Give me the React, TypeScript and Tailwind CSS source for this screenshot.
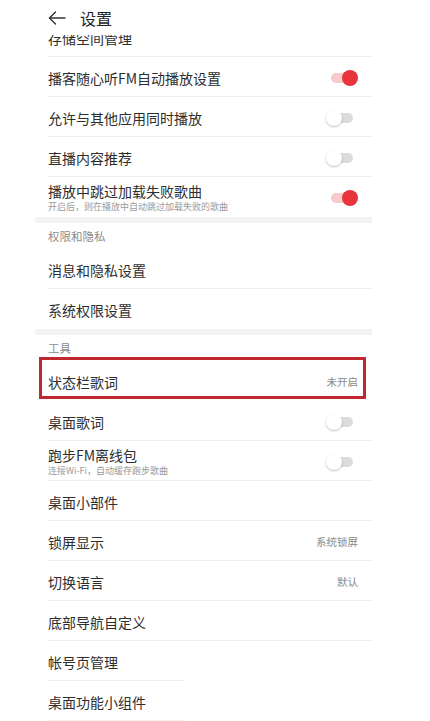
import React from "react";

type Row = {
  title: string;
  sub?: string;
  toggle?: boolean;
  on?: boolean;
  value?: string;
  line?: "full" | "short" | "none";
  mark?: boolean;
};

const font = { fontFamily: '"Noto Sans CJK SC", "Noto Sans", sans-serif' };

function Toggle({ on }: { on?: boolean }) {
  return (
    <div className="relative w-[32px] h-[16px] flex items-center">
      <div
        className={`absolute left-[5px] right-[5px] h-[10px] rounded-full ${on ? "bg-[#f7cacc]" : "bg-[#dcdcdc]"}`}
      />
      {on ? (
        <div className="absolute right-0 w-[16px] h-[16px] rounded-full bg-[#e8343a]" />
      ) : (
        <div className="absolute left-0 w-[16px] h-[16px] rounded-full bg-white shadow-[0_1px_2px_rgba(0,0,0,0.25)]" />
      )}
    </div>
  );
}

function SettingRow({ row }: { row: Row }) {
  return (
    <div className="relative h-[40px] pl-[13px]">
      <div className="h-full flex items-center pr-[14px] pt-[2px]">
        <div className="flex-1 flex flex-col">
          <span className="text-[14px] leading-[17px] text-[#2e2e2e]">{row.title}</span>
          {row.sub && (
            <span className="text-[9px] leading-[12px] text-[#9a9a9a] mt-[1px]">{row.sub}</span>
          )}
        </div>
        {row.toggle && <Toggle on={row.on} />}
        {row.value && <span className="text-[10.5px] text-[#8a8a8a]">{row.value}</span>}
      </div>
      {row.line !== "none" && (
        <div
          className={`absolute bottom-0 left-[13px] h-px bg-[#efefef] ${row.line === "short" ? "w-[137px]" : "right-0"}`}
        />
      )}
      {/* annotation box drawn over the row */}
      {row.mark && (
        <div className="absolute left-[4px] right-[6px] top-[-4px] bottom-[2px] border-[3px] border-[#c1272e]" />
      )}
    </div>
  );
}

function SectionHead({ label }: { label: string }) {
  return (
    <div className="h-[26px] pl-[13px] flex items-center pt-[2px]">
      <span className="text-[11.5px] text-[#8c8c8c]">{label}</span>
    </div>
  );
}

function Gap() {
  return <div className="h-[6px] bg-[#f3f3f3]" />;
}

const playback: Row[] = [
  { title: "存储空间管理" },
  { title: "播客随心听FM自动播放设置", toggle: true, on: true },
  { title: "允许与其他应用同时播放", toggle: true },
  { title: "直播内容推荐", toggle: true },
  { title: "播放中跳过加载失败歌曲", sub: "开启后，则在播放中自动跳过加载失败的歌曲", toggle: true, on: true, line: "none" },
];

const privacy: Row[] = [
  { title: "消息和隐私设置" },
  { title: "系统权限设置", line: "none" },
];

const tools: Row[] = [
  { title: "状态栏歌词", value: "未开启", line: "none", mark: true },
  { title: "桌面歌词", toggle: true },
  { title: "跑步FM离线包", sub: "连接Wi-Fi，自动缓存跑步歌曲", toggle: true },
  { title: "桌面小部件" },
  { title: "锁屏显示", value: "系统锁屏" },
  { title: "切换语言", value: "默认" },
  { title: "底部导航自定义" },
  { title: "帐号页管理", line: "short" },
  { title: "桌面功能小组件", line: "short" },
];

export default function App() {
  return (
    <div className="w-[430px] h-[721px] bg-white overflow-hidden" style={font}>
      <div className="ml-[35px] w-[337px] h-full flex flex-col">
        {/* header */}
        <div className="relative z-10 h-[35px] bg-white flex items-center pl-[13px] gap-[14px]">
          <svg width="18" height="14" viewBox="0 0 18 14" fill="none" stroke="#333" strokeWidth="1.4" strokeLinecap="round" strokeLinejoin="round">
            <path d="M17 7H1.5" />
            <path d="M7.5 1L1.5 7l6 6" />
          </svg>
          <span className="text-[16px] text-[#222]">设置</span>
        </div>

        {/* list, scrolled so the first row sits under the header */}
        <div className="flex-1 overflow-hidden">
          <div className="mt-[-18px]">
            {playback.map((r) => (
              <SettingRow key={r.title} row={r} />
            ))}
            <Gap />
            <SectionHead label="权限和隐私" />
            {privacy.map((r) => (
              <SettingRow key={r.title} row={r} />
            ))}
            <Gap />
            <SectionHead label="工具" />
            {tools.map((r) => (
              <SettingRow key={r.title} row={r} />
            ))}
          </div>
        </div>
      </div>
    </div>
  );
}
